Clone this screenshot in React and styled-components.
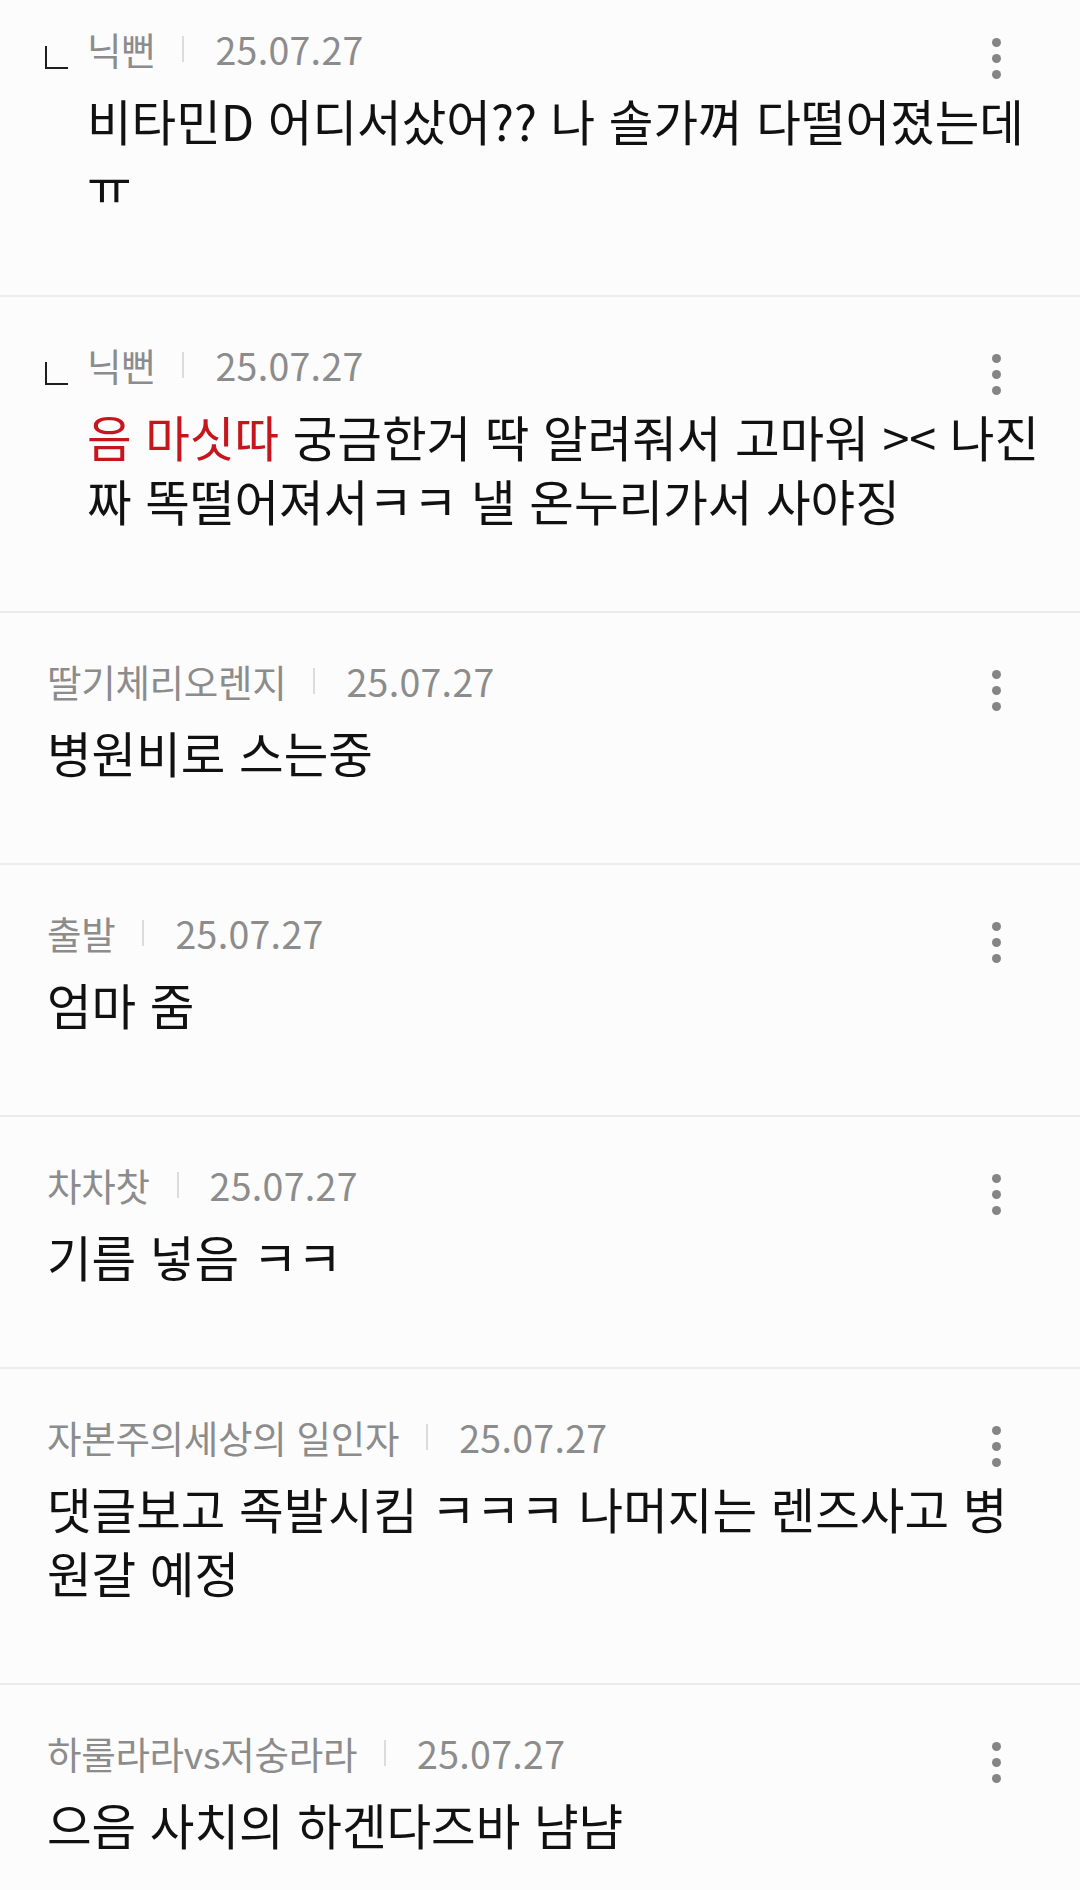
import React from "react";
import styled, { createGlobalStyle } from "styled-components";

const comments = [
  {
    id: 1,
    reply: true,
    nick: "닉뻔",
    date: "25.07.27",
    body: [{ text: "비타민D 어디서샀어?? 나 솔가껴 다떨어졌는데ㅠ" }],
  },
  {
    id: 2,
    reply: true,
    nick: "닉뻔",
    date: "25.07.27",
    body: [
      { text: "음 마싯따", mention: true },
      { text: " 궁금한거 딱 알려줘서 고마워 >< 나진짜 똑떨어져서ㅋㅋ 낼 온누리가서 사야징" },
    ],
  },
  { id: 3, nick: "딸기체리오렌지", date: "25.07.27", body: [{ text: "병원비로 스는중" }] },
  { id: 4, nick: "출발", date: "25.07.27", body: [{ text: "엄마 줌" }] },
  { id: 5, nick: "차차찻", date: "25.07.27", body: [{ text: "기름 넣음 ㅋㅋ" }] },
  {
    id: 6,
    nick: "자본주의세상의 일인자",
    date: "25.07.27",
    body: [{ text: "댓글보고 족발시킴 ㅋㅋㅋ 나머지는 렌즈사고 병원갈 예정" }],
  },
  { id: 7, nick: "하룰라라vs저숭라라", date: "25.07.27", body: [{ text: "으음 사치의 하겐다즈바 냠냠" }] },
];

const GlobalStyle = createGlobalStyle`
  html, body {
    margin: 0;
    padding: 0;
    background: #fcfcfc;
    overflow: hidden;
  }
  body {
    font-family: "Noto Sans CJK KR", "Noto Sans", sans-serif;
  }
`;

const CommentItem = ({ comment }) => (
  <Item>
    {comment.reply && (
      <ReplyMark>
        <Corner />
      </ReplyMark>
    )}
    <Content>
      <Meta>
        <Nick>{comment.nick}</Nick>
        <Separator />
        <DateText>{comment.date}</DateText>
        <MoreButton aria-label="more">
          <Dot />
          <Dot />
          <Dot />
        </MoreButton>
      </Meta>
      <Body>
        {comment.body.map((part, i) =>
          part.mention ? <Mention key={i}>{part.text}</Mention> : <span key={i}>{part.text}</span>
        )}
      </Body>
    </Content>
  </Item>
);

const App = () => {
  return (
    <>
      <GlobalStyle />
      <List lang="ko">
        {comments.map((c) => (
          <CommentItem comment={c} key={c.id} />
        ))}
      </List>
    </>
  );
};

export default App;

const List = styled.div`
  display: flex;
  flex-direction: column;
  margin-top: -19px;
  background: #fcfcfc;
`;

const Item = styled.div`
  display: flex;
  padding: 46px 37px 79px 47px;
  border-bottom: 2px solid #ebebeb;
`;

const ReplyMark = styled.div`
  width: 40px;
  flex-shrink: 0;
  height: 44px;
  display: flex;
  align-items: flex-end;
`;

const Corner = styled.span`
  width: 21px;
  height: 21px;
  margin: 0 0 2px -2px;
  border-left: 2px solid #1e1e1e;
  border-bottom: 2px solid #1e1e1e;
`;

const Content = styled.div`
  flex: 1;
  min-width: 0;
`;

const Meta = styled.div`
  display: flex;
  align-items: center;
  height: 44px;
  color: #8c8c8c;
`;

const Nick = styled.span`
  font-size: 37.5px;
  line-height: 44px;
  letter-spacing: -0.3px;
`;

const Separator = styled.span`
  width: 2px;
  height: 26px;
  background: #dcdcdc;
  margin: 0 31px 0 27px;
`;

const DateText = styled.span`
  font-size: 37.5px;
  line-height: 44px;
  letter-spacing: 0.3px;
`;

const MoreButton = styled.button`
  margin-left: auto;
  margin-right: 27px;
  margin-top: 18px;
  width: 40px;
  display: flex;
  flex-direction: column;
  align-items: center;
  gap: 7px;
  padding: 0;
  border: none;
  background: transparent;
`;

const Dot = styled.span`
  width: 9px;
  height: 9px;
  border-radius: 50%;
  background: #858585;
`;

const Body = styled.div`
  margin-top: 17px;
  font-size: 48.5px;
  line-height: 64px;
  color: #111;
`;

const Mention = styled.span`
  color: #c4161c;
`;
